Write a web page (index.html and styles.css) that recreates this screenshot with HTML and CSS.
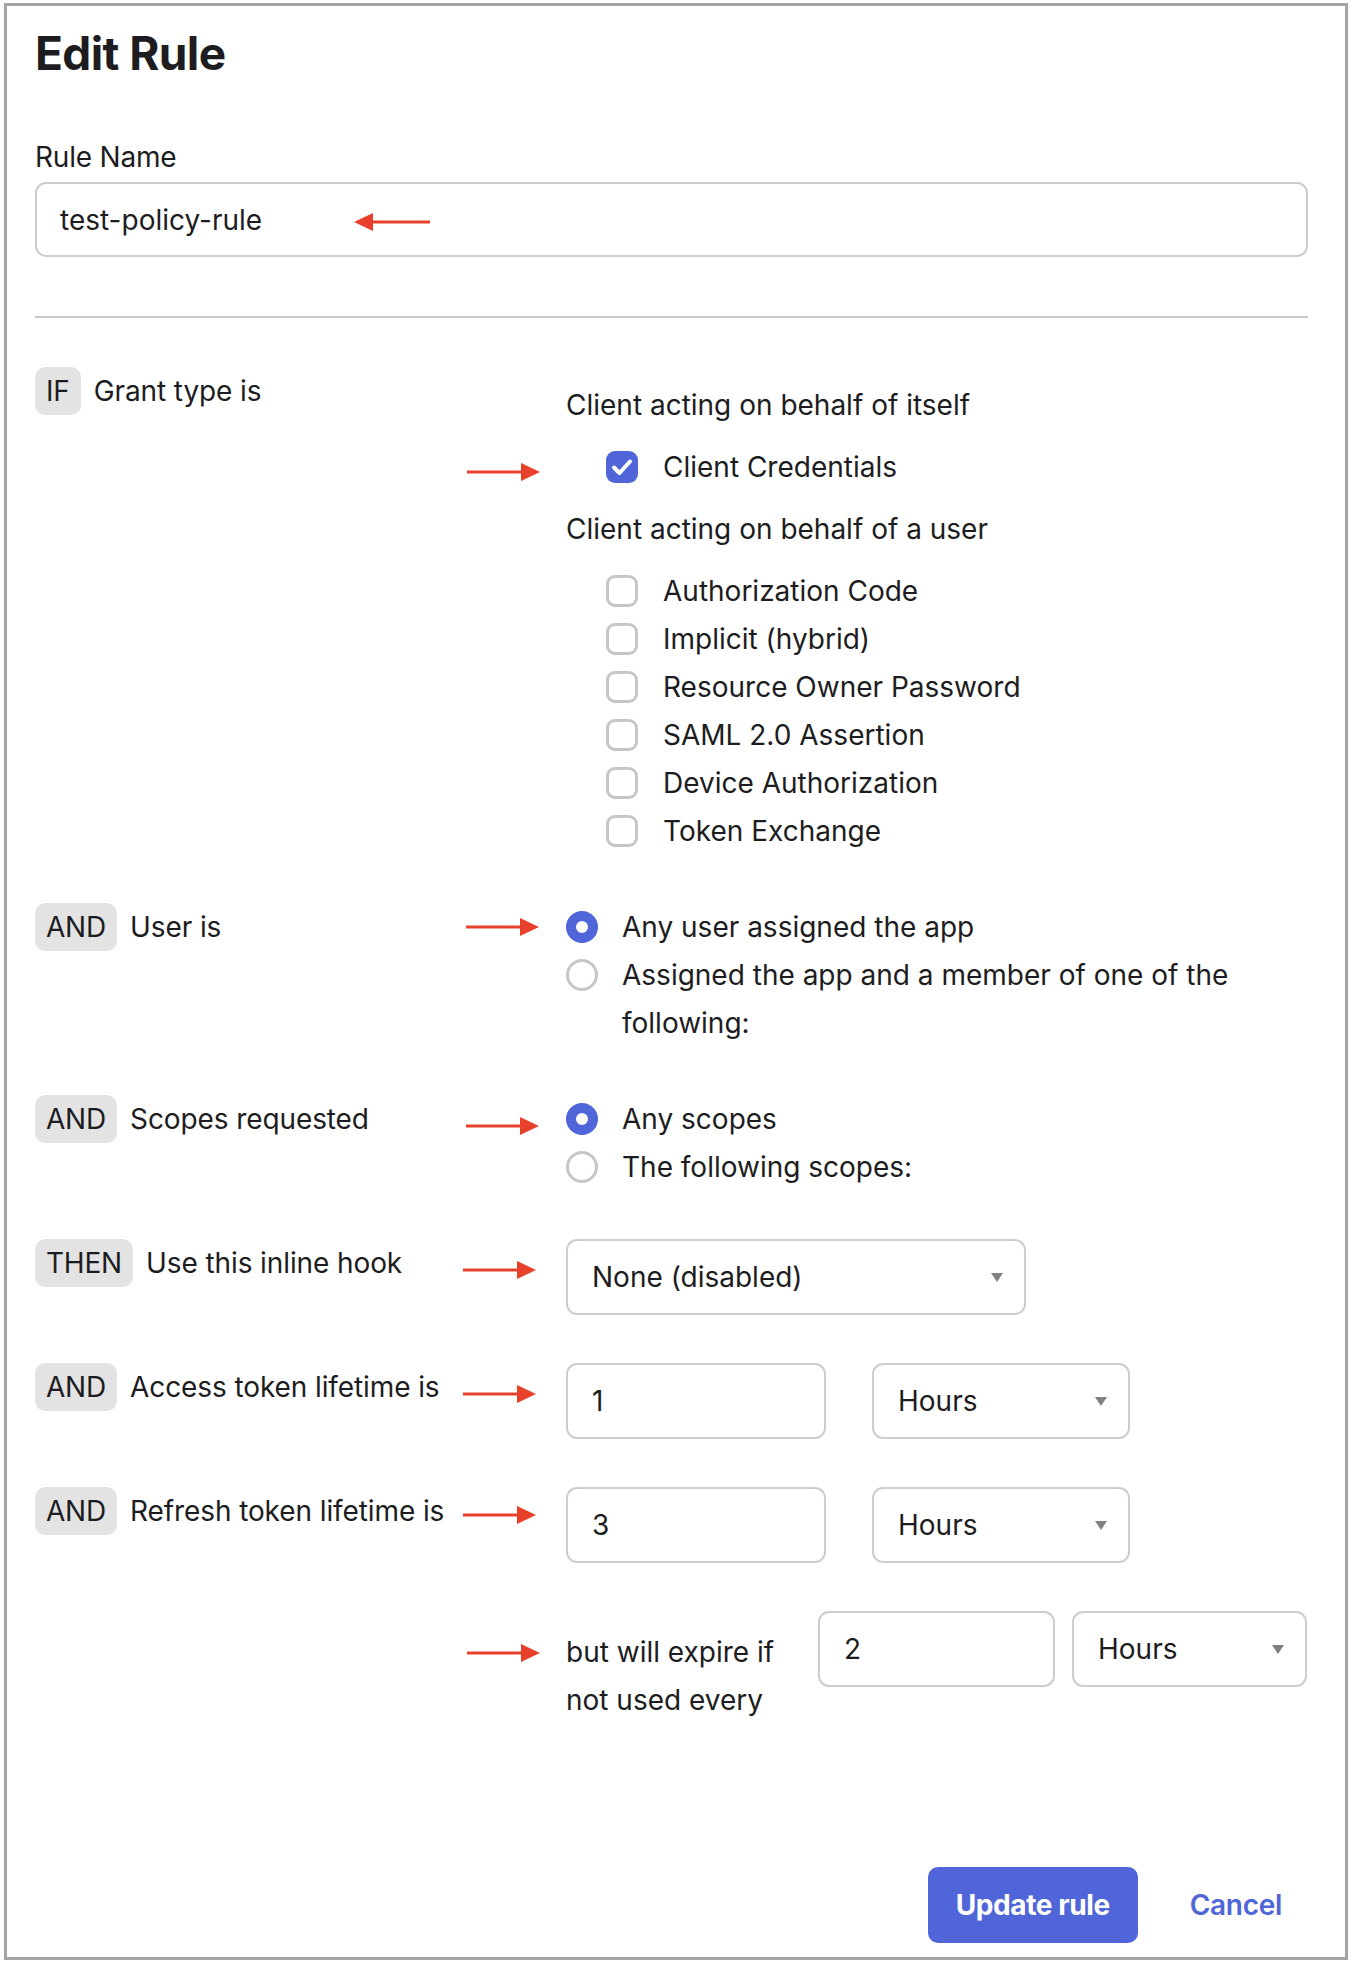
FILE: index.html
```html
<!DOCTYPE html>
<html lang="en">
<head>
<meta charset="utf-8">
<title>Edit Rule</title>
<link rel="stylesheet" href="styles.css">
</head>
<body>
<div class="frame">
  <h1 class="title">Edit Rule</h1>
  <div class="field-label">Rule Name</div>
  <div class="text-input name-input">
    <span>test-policy-rule</span>
    <svg class="annot annot-name" width="76" height="20" viewBox="0 0 76 20"><line x1="18" y1="10" x2="76" y2="10" stroke="#e8412b" stroke-width="3"/><polygon points="0,10 19,1 19,19" fill="#e8412b"/></svg>
  </div>
  <div class="divider"></div>

  <div class="rules">
    <div class="rule-row">
      <div class="cond"><span class="badge">IF</span><span class="cond-text">Grant type is</span></div>
      <div class="value grant">
        <div class="group-title">Client acting on behalf of itself</div>
        <div class="check-list">
          <div class="check-item">
            <svg class="annot annot-cc" width="73" height="20" viewBox="0 0 73 20"><line x1="0" y1="10" x2="56" y2="10" stroke="#e8412b" stroke-width="3"/><polygon points="73,10 54,1 54,19" fill="#e8412b"/></svg>
            <span class="checkbox checked"><svg width="32" height="32" viewBox="0 0 32 32"><path d="M8 16.5 L13.5 22 L24 10.5" fill="none" stroke="#fff" stroke-width="4" stroke-linecap="round" stroke-linejoin="round"/></svg></span>
            <span>Client Credentials</span>
          </div>
        </div>
        <div class="group-title">Client acting on behalf of a user</div>
        <div class="check-list">
          <div class="check-item"><span class="checkbox"></span><span>Authorization Code</span></div>
          <div class="check-item"><span class="checkbox"></span><span>Implicit (hybrid)</span></div>
          <div class="check-item"><span class="checkbox"></span><span>Resource Owner Password</span></div>
          <div class="check-item"><span class="checkbox"></span><span>SAML 2.0 Assertion</span></div>
          <div class="check-item"><span class="checkbox"></span><span>Device Authorization</span></div>
          <div class="check-item"><span class="checkbox"></span><span>Token Exchange</span></div>
        </div>
      </div>
    </div>

    <div class="rule-row">
      <div class="cond"><span class="badge">AND</span><span class="cond-text">User is</span></div>
      <div class="value">
        <div class="radio-item">
          <svg class="annot annot-user" width="73" height="20" viewBox="0 0 73 20"><line x1="0" y1="10" x2="56" y2="10" stroke="#e8412b" stroke-width="3"/><polygon points="73,10 54,1 54,19" fill="#e8412b"/></svg>
          <span class="radio checked"></span><span>Any user assigned the app</span>
        </div>
        <div class="radio-item"><span class="radio"></span><span>Assigned the app and a member of one of the following:</span></div>
      </div>
    </div>

    <div class="rule-row">
      <div class="cond"><span class="badge">AND</span><span class="cond-text">Scopes requested</span></div>
      <div class="value">
        <div class="radio-item">
          <svg class="annot annot-scopes" width="73" height="20" viewBox="0 0 73 20"><line x1="0" y1="10" x2="56" y2="10" stroke="#e8412b" stroke-width="3"/><polygon points="73,10 54,1 54,19" fill="#e8412b"/></svg>
          <span class="radio checked"></span><span>Any scopes</span>
        </div>
        <div class="radio-item"><span class="radio"></span><span>The following scopes:</span></div>
      </div>
    </div>

    <div class="rule-row">
      <div class="cond"><span class="badge">THEN</span><span class="cond-text">Use this inline hook</span></div>
      <div class="value">
        <div class="select hook-select">
          <svg class="annot annot-field" width="73" height="20" viewBox="0 0 73 20"><line x1="0" y1="10" x2="56" y2="10" stroke="#e8412b" stroke-width="3"/><polygon points="73,10 54,1 54,19" fill="#e8412b"/></svg>
          <span>None (disabled)</span><span class="caret"></span>
        </div>
      </div>
    </div>

    <div class="rule-row">
      <div class="cond"><span class="badge">AND</span><span class="cond-text">Access token lifetime is</span></div>
      <div class="value lifetime">
        <div class="text-input">
          <svg class="annot annot-field" width="73" height="20" viewBox="0 0 73 20"><line x1="0" y1="10" x2="56" y2="10" stroke="#e8412b" stroke-width="3"/><polygon points="73,10 54,1 54,19" fill="#e8412b"/></svg>
          <span>1</span>
        </div>
        <div class="select"><span>Hours</span><span class="caret"></span></div>
      </div>
    </div>

    <div class="rule-row">
      <div class="cond"><span class="badge">AND</span><span class="cond-text">Refresh token lifetime is</span></div>
      <div class="value lifetime">
        <div class="text-input">
          <svg class="annot annot-refresh" width="73" height="20" viewBox="0 0 73 20"><line x1="0" y1="10" x2="56" y2="10" stroke="#e8412b" stroke-width="3"/><polygon points="73,10 54,1 54,19" fill="#e8412b"/></svg>
          <span>3</span>
        </div>
        <div class="select"><span>Hours</span><span class="caret"></span></div>
      </div>
    </div>

    <div class="rule-row">
      <div class="cond"></div>
      <div class="value expire">
        <div class="expire-text">
          <svg class="annot annot-expire" width="73" height="20" viewBox="0 0 73 20"><line x1="0" y1="10" x2="56" y2="10" stroke="#e8412b" stroke-width="3"/><polygon points="73,10 54,1 54,19" fill="#e8412b"/></svg>
          but will expire if not used every
        </div>
        <div class="text-input"><span>2</span></div>
        <div class="select"><span>Hours</span><span class="caret"></span></div>
      </div>
    </div>
  </div>

  <div class="actions">
    <button class="btn-primary" type="button">Update rule</button>
    <a class="btn-link" href="#">Cancel</a>
  </div>
</div>
</body>
</html>
```

FILE: styles.css
```css
* { box-sizing: border-box; }

html, body {
  margin: 0;
  padding: 0;
  background: #ffffff;
}

body {
  font-family: "Inter", "Noto Sans", "Liberation Sans", sans-serif;
  font-size: 28px;
  color: #1d1d21;
}

.frame {
  margin: 3px 0 0 4px;
  width: 1344px;
  height: 1957px;
  border: 3px solid #a4a4a4;
  padding: 21px 37px 0 28px;
  background: #fff;
}

.title {
  margin: 0;
  font-size: 46px;
  line-height: 53px;
  font-weight: 700;
  letter-spacing: -0.6px;
}

.field-label {
  margin-top: 59px;
  line-height: 36px;
  letter-spacing: -0.2px;
}

.text-input,
.select {
  position: relative;
  display: flex;
  align-items: center;
  height: 76px;
  border: 2px solid #cdcdcd;
  border-radius: 11px;
  padding: 0 24px;
  line-height: 36px;
  background: #fff;
}

.name-input {
  margin-top: 7px;
  height: 75px;
  padding-left: 23px;
}

.annot {
  position: absolute;
  display: block;
}

.annot-name { left: 317px; top: 28px; }

.divider {
  margin-top: 59px;
  height: 2px;
  background: #c9c9cb;
}

.rules {
  margin-top: 49px;
  display: flex;
  flex-direction: column;
  gap: 48px;
}

.rule-row {
  display: grid;
  grid-template-columns: 531px 1fr;
  align-items: start;
}

.cond {
  display: flex;
  align-items: center;
  gap: 13px;
  height: 48px;
}

.badge {
  display: inline-flex;
  align-items: center;
  height: 48px;
  padding: 0 11px;
  background: #e3e3e4;
  border-radius: 10px;
  line-height: 48px;
  letter-spacing: -0.2px;
}

.cond-text { line-height: 48px; white-space: nowrap; letter-spacing: -0.1px; }

.value { position: relative; }

.grant {
  padding-top: 14px;
  display: flex;
  flex-direction: column;
  gap: 14px;
}

.group-title { line-height: 48px; }

.check-item {
  position: relative;
  display: flex;
  align-items: center;
  gap: 25px;
  height: 48px;
  padding-left: 40px;
}

.checkbox {
  flex: none;
  width: 32px;
  height: 32px;
  border: 3px solid #c6c6c8;
  border-radius: 9px;
  background: #fff;
}

.checkbox.checked {
  border: none;
  background: #4f65d8;
}

.checkbox svg { display: block; }

.annot-cc { left: -99px; top: 19px; }

.radio-item {
  position: relative;
  display: flex;
  align-items: flex-start;
  gap: 24px;
  line-height: 48px;
}

.radio {
  flex: none;
  margin-top: 8px;
  width: 32px;
  height: 32px;
  border: 3px solid #c6c6c8;
  border-radius: 50%;
  background: #fff;
}

.radio.checked {
  border: 10px solid #4f65d8;
}

.annot-user { left: -100px; top: 14px; }
.annot-scopes { left: -100px; top: 21px; }

.hook-select {
  width: 460px;
}

.select {
  justify-content: space-between;
}

.caret {
  width: 0;
  height: 0;
  border-left: 6px solid transparent;
  border-right: 6px solid transparent;
  border-top: 9px solid #808080;
  margin-right: -3px;
}

.annot-field { left: -105px; top: 19px; }
.annot-refresh { left: -105px; top: 16px; }

.lifetime {
  display: grid;
  grid-template-columns: 260px 258px;
  gap: 46px;
}

.expire {
  display: grid;
  grid-template-columns: 235px 237px 235px;
  gap: 17px;
}

.expire-text {
  position: relative;
  padding-top: 17px;
  line-height: 48px;
}

.annot-expire { left: -99px; top: 32px; }

.actions {
  margin-top: 143px;
  display: flex;
  justify-content: flex-end;
  align-items: center;
  gap: 52px;
  padding-right: 26px;
}

.btn-primary {
  width: 210px;
  height: 76px;
  border: none;
  border-radius: 10px;
  background: #4f65d8;
  color: #fff;
  font-family: inherit;
  font-size: 28px;
  font-weight: 700;
  letter-spacing: -0.4px;
  padding: 0;
}

.btn-link {
  color: #4f65d8;
  font-weight: 600;
  text-decoration: none;
  letter-spacing: -0.3px;
}
```
